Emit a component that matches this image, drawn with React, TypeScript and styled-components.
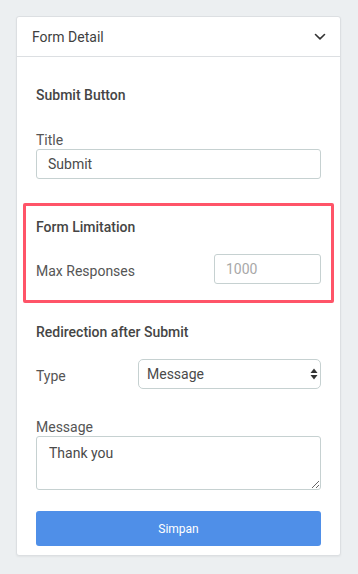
import React from "react";
import styled, { createGlobalStyle } from "styled-components";

const Global = createGlobalStyle`
  html, body { margin: 0; padding: 0; background: #eceff1; }
  body { font-family: Roboto, "Noto Sans", Arial, sans-serif; color: #4a4a4a; }
  * { box-sizing: border-box; }
`;

const Page = styled.div`
  padding: 16px 17px 19px 16px;
`;

const Card = styled.div`
  background: #fff;
  border: 1px solid #dcdfe2;
  border-radius: 3px;
  box-shadow: 0 1px 2px rgba(0, 0, 0, 0.05);
`;

const Header = styled.div`
  height: 40px;
  display: flex;
  align-items: center;
  justify-content: space-between;
  padding: 0 14px 0 15px;
  border-bottom: 1px solid #dcdfe2;
  font-size: 14px;
  color: #3f3f3f;
`;

const Body = styled.div`
  padding: 28px 19px 9px 19px;
  display: flex;
  flex-direction: column;
`;

const Heading = styled.div<{ $mt?: number }>`
  font-size: 14px;
  font-weight: 500;
  line-height: 20px;
  color: #454545;
  margin-top: ${(p) => p.$mt ?? 0}px;
`;

const Label = styled.div<{ $mt?: number }>`
  font-size: 14px;
  line-height: 18px;
  color: #555;
  margin-top: ${(p) => p.$mt ?? 0}px;
`;

const Input = styled.input<{ $w?: number }>`
  display: block;
  width: ${(p) => (p.$w ? `${p.$w}px` : "100%")};
  height: 30px;
  border: 1px solid #c6d1d1;
  border-radius: 3px;
  padding: 0 11px;
  font-family: inherit;
  font-size: 14px;
  color: #4a4a4a;
  background: #fff;
  outline: none;
  &::placeholder { color: #a8a8a8; }
`;

const Highlight = styled.div`
  margin: 24px -13px 0;
  border: 3px solid #ff5468;
  border-radius: 2px;
  padding: 11px 10px 16px;
`;

const Row = styled.div<{ $mt: number }>`
  display: flex;
  align-items: center;
  justify-content: space-between;
  margin-top: ${(p) => p.$mt}px;
`;

const RowLabel = styled.div<{ $w?: number }>`
  font-size: 14px;
  line-height: 18px;
  color: #555;
  padding-top: 4px;
  ${(p) => (p.$w ? `width: ${p.$w}px; flex: none;` : "")}
`;

const SelectWrap = styled.div`
  position: relative;
  flex: 1;
`;

const Select = styled.select`
  appearance: none;
  -webkit-appearance: none;
  display: block;
  width: 100%;
  height: 30px;
  border: 1px solid #c6d1d1;
  border-radius: 5px;
  padding: 0 8px;
  font-family: inherit;
  font-size: 14px;
  color: #4a4a4a;
  background: #fff;
  outline: none;
`;

const Arrows = styled.svg`
  position: absolute;
  right: 3px;
  top: 9px;
  pointer-events: none;
`;

const TextArea = styled.textarea`
  display: block;
  width: 100%;
  height: 54px;
  border: 1px solid #c6d1d1;
  border-radius: 3px;
  padding: 7px 12px;
  font-family: inherit;
  font-size: 14px;
  line-height: 18px;
  color: #4a4a4a;
  background: #fff;
  outline: none;
  resize: vertical;
`;

const Button = styled.button`
  margin-top: 21px;
  height: 35px;
  width: 100%;
  border: none;
  border-radius: 3px;
  background: #4f8fe8;
  color: #fff;
  font-family: inherit;
  font-size: 12px;
  cursor: pointer;
`;

export default function App() {
  return (
    <>
      <Global />
      <Page>
        <Card>
          <Header>
            <span>Form Detail</span>
            <svg width="12" height="8" viewBox="0 0 12 8" fill="none">
              <path d="M1.5 1.5 L6 5.8 L10.5 1.5" stroke="#333" strokeWidth="1.6" strokeLinecap="round" strokeLinejoin="round" />
            </svg>
          </Header>
          <Body>
            <Heading>Submit Button</Heading>
            <Label $mt={26}>Title</Label>
            <Input defaultValue="Submit" />
            <Highlight>
              <Heading>Form Limitation</Heading>
              <Row $mt={17}>
                <RowLabel>Max Responses</RowLabel>
                <Input $w={107} placeholder="1000" />
              </Row>
            </Highlight>
            <Heading $mt={19}>Redirection after Submit</Heading>
            <Row $mt={17}>
              <RowLabel $w={102}>Type</RowLabel>
              <SelectWrap>
                <Select defaultValue="message">
                  <option value="message">Message</option>
                  <option value="url">URL</option>
                </Select>
                <Arrows width="8" height="12" viewBox="0 0 8 12">
                  <path d="M4 0.5 L7.5 5 L0.5 5 Z" fill="#333" />
                  <path d="M4 11.5 L7.5 7 L0.5 7 Z" fill="#333" />
                </Arrows>
              </SelectWrap>
            </Row>
            <Label $mt={29}>Message</Label>
            <TextArea defaultValue="Thank you" />
            <Button>Simpan</Button>
          </Body>
        </Card>
      </Page>
    </>
  );
}
